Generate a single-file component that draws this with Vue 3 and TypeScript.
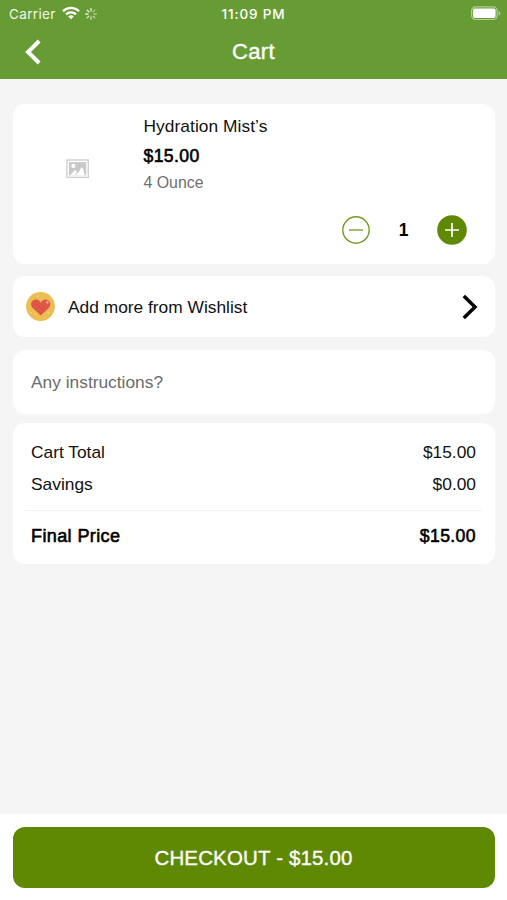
<script setup lang="ts">
import { computed, ref } from 'vue'

const unitPrice = 15
const quantity = ref(1)
const instructions = ref('')
const money = (value: number): string => `$${value.toFixed(2)}`
const total = computed(() => money(unitPrice * quantity.value))
const spokes = [
  { angle: 0, opacity: 0.9 },
  { angle: 45, opacity: 0.45 },
  { angle: 90, opacity: 0.5 },
  { angle: 135, opacity: 0.6 },
  { angle: 180, opacity: 0.65 },
  { angle: 225, opacity: 0.75 },
  { angle: 270, opacity: 0.85 },
  { angle: 315, opacity: 0.9 },
]

function decrease(): void {
  if (quantity.value > 1) quantity.value -= 1
}
</script>

<template>
  <div class="screen">
    <header class="header">
      <div class="status">
        <div class="status-left">
          <span class="carrier">Carrier</span>
          <svg class="wifi" width="18" height="14" viewBox="0 0 18 14" fill="none" stroke="#fff" stroke-width="2.3">
            <path d="M1 5.2C5.5.7 12.5.7 17 5.2" />
            <path d="M4 8.3C6.8 5.6 11.2 5.6 14 8.3" />
            <path d="M6.2 10.4C7.8 8.9 10.2 8.9 11.8 10.4L9 13.2Z" fill="#fff" stroke="none" />
          </svg>
          <svg class="spinner" width="14" height="14" viewBox="-7 -7 14 14" stroke="#fff" stroke-width="1.3" stroke-linecap="round">
            <line
              v-for="spoke in spokes"
              :key="spoke.angle"
              x1="0"
              y1="-3"
              x2="0"
              y2="-5.3"
              :opacity="spoke.opacity"
              :transform="`rotate(${spoke.angle})`"
            />
          </svg>
        </div>
        <span class="clock">11:09 PM</span>
        <svg class="battery" width="31" height="15" viewBox="0 0 31 15">
          <rect x="1.6" y=".9" width="25.6" height="12.6" rx="4" fill="none" stroke="#fff" stroke-opacity=".5" stroke-width="1.2" />
          <rect x="3" y="2.5" width="22.6" height="9.5" rx="2" fill="#fff" />
          <path d="M28.7 5.2c2.2.6 2.2 3.4 0 4z" fill="#fff" fill-opacity=".5" />
        </svg>
      </div>
      <div class="nav">
        <button class="plain back" aria-label="Back">
          <svg width="18" height="28" viewBox="0 0 18 28" fill="none" stroke="#fff" stroke-width="4">
            <path d="M15.2 3L4 14 15.2 25" />
          </svg>
        </button>
        <h1 class="title">Cart</h1>
      </div>
    </header>

    <main class="content">
      <section class="card product">
        <div class="thumb">
          <svg width="24" height="20" viewBox="0 0 24 20">
            <rect x=".9" y="1" width="21.4" height="17.4" fill="#fff" stroke="#cfcfcf" stroke-width="1.4" />
            <rect x="3" y="3.1" width="17.2" height="13.2" fill="#c8c8c8" />
            <circle cx="7.3" cy="6.9" r="2.1" fill="#fff" />
            <path d="M4.4 16.3l4.4-5.2 2.4 1.7-2.6 3.5z" fill="#fff" />
            <path d="M9.2 16.3l3.4-3.1 3-5.2 1.6 2.1 1.5 6.2z" fill="#fff" />
          </svg>
        </div>
        <div class="details">
          <div class="name">Hydration Mist’s</div>
          <div class="price medium">{{ money(unitPrice) }}</div>
          <div class="size">4 Ounce</div>
          <div class="stepper">
            <button class="plain" aria-label="Decrease" @click="decrease">
              <svg width="30" height="30" viewBox="0 0 30 30" fill="none" stroke="#719a24">
                <circle cx="15" cy="15" r="13.2" stroke-width="1.4" />
                <path d="M8 15h14" stroke-width="1.3" />
              </svg>
            </button>
            <span class="quantity">{{ quantity }}</span>
            <button class="plain" aria-label="Increase" @click="quantity++">
              <svg width="30" height="30" viewBox="0 0 30 30">
                <circle cx="15" cy="15" r="14.8" fill="#5f8903" />
                <path d="M8 15h14M15 8v14" stroke="#fff" stroke-width="1.7" />
              </svg>
            </button>
          </div>
        </div>
      </section>

      <section class="card wishlist">
        <svg class="heart" width="29" height="29" viewBox="0 0 29 29">
          <circle cx="14.5" cy="14.5" r="14.4" fill="#ecbd52" />
          <path d="M14.7 23.5L6.3 15.4C3.2 11.3 6.7 7.2 10.3 7.6c2 .2 3.5 1.4 4.4 3.1 1-1.7 2.5-2.9 4.5-3.1 3.9-.3 6.9 3.9 4 7.8z" fill="#df5546" />
          <path d="M21 8.2l1 1.3 1.5.6-1.3 1-.5 1.4-1-1.4-1.5-.4 1.2-1z" fill="#f3a78d" />
          <g fill="#f5d98e">
            <circle cx="11.5" cy="4.5" r=".9" /><circle cx="5" cy="20.7" r=".9" />
            <circle cx="8.8" cy="22.2" r=".8" /><circle cx="22.3" cy="20.5" r=".9" />
          </g>
        </svg>
        <span class="wishlist-label">Add more from Wishlist</span>
        <svg class="chevron" width="18" height="28" viewBox="0 0 18 28" fill="none" stroke="#000" stroke-width="3.5">
          <path d="M2.8 3L14 14 2.8 25" />
        </svg>
      </section>

      <section class="card note">
        <input v-model="instructions" class="note-input" type="text" placeholder="Any instructions?" />
      </section>

      <section class="card summary">
        <div class="row"><span>Cart Total</span><span>{{ total }}</span></div>
        <div class="row"><span>Savings</span><span>$0.00</span></div>
        <div class="divider"></div>
        <div class="row final medium"><span class="final-label">Final Price</span><span>{{ total }}</span></div>
      </section>
    </main>

    <footer class="footer">
      <button class="checkout">CHECKOUT - {{ total }}</button>
    </footer>
  </div>
</template>

<style>
body {
  margin: 0;
}
</style>

<style scoped>
.screen {
  display: flex;
  flex-direction: column;
  width: 100%;
  height: 900px;
  overflow: hidden;
  background: #f5f5f5;
  color: #111;
  font-family: "Liberation Sans", Arial, sans-serif;
  font-size: 17.35px;
}
.screen *,
.screen {
  box-sizing: border-box;
}
svg {
  display: block;
  flex: none;
}
.plain {
  padding: 0;
  border: 0;
  background: none;
  cursor: pointer;
}
.header {
  flex: none;
  height: 79px;
  background: #679c35;
  color: #fff;
}
.status {
  display: grid;
  grid-template-columns: 1fr auto 1fr;
  align-items: center;
  height: 27px;
  padding: 0 6px 0 9px;
  font-family: Inter, sans-serif;
  font-size: 13.5px;
}
.status-left {
  display: flex;
  align-items: center;
}
.carrier {
  width: 53px;
  letter-spacing: 0.35px;
  color: #f1f7e9;
}
.wifi {
  margin-top: -2px;
}
.spinner {
  margin-left: 4px;
}
.clock {
  margin-right: 3px;
  font-weight: 500;
  letter-spacing: 0.85px;
}
.battery {
  justify-self: end;
  margin-top: -1px;
}
.nav {
  display: grid;
  grid-template-columns: 1fr auto 1fr;
  align-items: center;
  height: 50px;
  padding: 0 23px;
}
.back {
  justify-self: start;
  padding-left: 1px;
}
.title {
  margin: 0;
  font-size: 22px;
  font-weight: 400;
  line-height: 28px;
  letter-spacing: 0.3px;
  -webkit-text-stroke: 0.35px currentColor;
}
.content {
  flex: 1;
  padding: 25px 12.5px 0;
}
.card {
  border-radius: 12px;
  background: #fff;
}
.product {
  display: grid;
  grid-template-columns: 131px 1fr;
  height: 160px;
}
.thumb {
  display: flex;
  align-items: center;
  justify-content: center;
  height: 130px;
}
.details {
  padding-top: 11px;
}
.name {
  height: 30px;
  line-height: 22px;
  letter-spacing: 0.05px;
}
.medium {
  color: #000;
  letter-spacing: 0.4px;
  -webkit-text-stroke: 0.6px currentColor;
}
.price {
  height: 27px;
  font-size: 17.6px;
  line-height: 22px;
}
.size {
  height: 43px;
  font-size: 15.9px;
  line-height: 22px;
  color: #6f6f6f;
}
.stepper {
  display: flex;
  align-items: center;
  justify-content: flex-end;
  padding-right: 28px;
}
.quantity {
  width: 66px;
  padding-top: 1px;
  text-align: center;
  font-weight: 700;
  font-size: 17.5px;
  color: #000;
}
.wishlist {
  display: flex;
  align-items: center;
  height: 61px;
  margin-top: 12px;
  padding: 0 16px 0 13px;
}
.wishlist-label {
  flex: 1;
  margin-left: 13.5px;
  padding-top: 2px;
}
.note {
  height: 64px;
  margin-top: 13px;
}
.note-input {
  width: 100%;
  height: 100%;
  padding: 0 18.5px;
  border: 0;
  outline: 0;
  background: transparent;
  font: inherit;
}
.note-input::placeholder {
  color: #6b6b6b;
  opacity: 1;
}
.summary {
  height: 141px;
  margin-top: 9px;
  padding: 13px 18.5px 0;
}
.row {
  display: flex;
  align-items: center;
  justify-content: space-between;
  height: 32px;
}
.divider {
  height: 1px;
  margin: 10px -6px 9px;
  background: #f1f1f1;
}
.final {
  font-size: 17.6px;
}
.final-label {
  font-size: 18px;
}
.footer {
  flex: none;
  height: 86px;
  padding: 12.5px 12.5px;
  background: #fff;
}
.checkout {
  width: 100%;
  height: 61px;
  padding: 2px 0 0;
  border: 0;
  border-radius: 12px;
  background: #5f8903;
  color: #fff;
  font: inherit;
  font-size: 20.5px;
  letter-spacing: 0.15px;
  -webkit-text-stroke: 0.35px currentColor;
  cursor: pointer;
}
</style>
